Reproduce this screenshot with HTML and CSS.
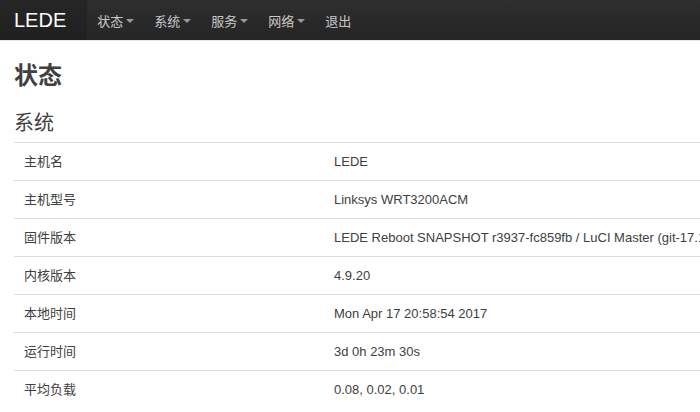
FILE: index.html
```html
<!DOCTYPE html>
<html lang="zh-CN">
<head>
<meta charset="utf-8">
<title>LEDE - 状态</title>
<link rel="stylesheet" href="styles.css">
</head>
<body>
<header class="navbar">
  <a class="brand" href="#">LEDE</a>
  <nav class="nav">
    <a class="nav-item" href="#">状态<span class="caret"></span></a>
    <a class="nav-item" href="#">系统<span class="caret"></span></a>
    <a class="nav-item" href="#">服务<span class="caret"></span></a>
    <a class="nav-item" href="#">网络<span class="caret"></span></a>
    <a class="nav-item" href="#">退出</a>
  </nav>
</header>
<main class="content">
  <h2 class="page-title">状态</h2>
  <h3 class="section-title">系统</h3>
  <div class="table">
    <div class="row"><div class="cell label">主机名</div><div class="cell value">LEDE</div></div>
    <div class="row"><div class="cell label">主机型号</div><div class="cell value">Linksys WRT3200ACM</div></div>
    <div class="row"><div class="cell label">固件版本</div><div class="cell value">LEDE Reboot SNAPSHOT r3937-fc859fb / LuCI Master (git-17.107.38524-2ef7b1b)</div></div>
    <div class="row"><div class="cell label">内核版本</div><div class="cell value">4.9.20</div></div>
    <div class="row"><div class="cell label">本地时间</div><div class="cell value">Mon Apr 17 20:58:54 2017</div></div>
    <div class="row"><div class="cell label">运行时间</div><div class="cell value">3d 0h 23m 30s</div></div>
    <div class="row"><div class="cell label">平均负载</div><div class="cell value">0.08, 0.02, 0.01</div></div>
  </div>
</main>
</body>
</html>
```
FILE: styles.css
```css
html, body {
  margin: 0;
  padding: 0;
  background: #fff;
  overflow: hidden;
}
body {
  font-family: "Liberation Sans", Arial, "Noto Sans CJK SC", sans-serif;
  color: #404040;
  font-size: 13px;
}
a { text-decoration: none; }

.navbar {
  display: flex;
  align-items: stretch;
  height: 40px;
  background: linear-gradient(#2e2e2e, #252525);
  border-bottom: 1px solid #e6e6e6;
}
.brand {
  display: flex;
  align-items: center;
  padding: 0 21px 0 14px;
  font-size: 20px;
  color: #fff;
  background: linear-gradient(#262626, #202020);
}
.nav {
  display: flex;
  align-items: stretch;
}
.nav-item {
  display: flex;
  align-items: center;
  padding: 0 10px;
  color: #c8c8c8;
  font-size: 13px;
}
.caret {
  display: inline-block;
  width: 0;
  height: 0;
  margin-left: 3px;
  margin-top: 2px;
  border-left: 4px solid transparent;
  border-right: 4px solid transparent;
  border-top: 4px solid #999;
}

.content {
  padding: 0 0 0 14px;
}
.page-title {
  margin: 19px 0 0;
  font-size: 24px;
  line-height: 32px;
  font-weight: bold;
  color: #404040;
}
.section-title {
  margin: 17px 0 0;
  font-size: 20px;
  line-height: 28px;
  font-weight: normal;
  color: #404040;
}
.table {
  margin-top: 5px;
  width: 760px;
}
.row {
  display: grid;
  grid-template-columns: 310px 1fr;
  border-top: 1px solid #ddd;
}
.cell {
  padding: 10px 10px;
  line-height: 17px;
  white-space: nowrap;
  overflow: hidden;
}
```
